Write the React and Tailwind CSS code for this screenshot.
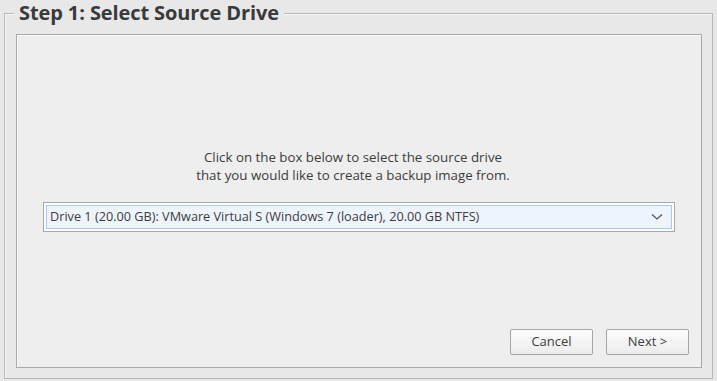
export default function App() {
  return (
    <div className="w-[717px] h-[381px] bg-[#e8e8e8] pl-[4px] pr-[4px] pt-[13px] pb-[2px] font-['Open_Sans',sans-serif] text-[#3c3c3c]">
      <div className="relative h-[366px] border border-[#b8b8b8] shadow-[inset_1px_1px_0_#f6f6f6] pl-[11px] pr-[10px] pt-[20px] pb-[10px] flex">
        <div className="absolute left-[9px] top-[-14px] px-[5px] bg-[#e8e8e8] text-[20px] leading-[26px] font-bold tracking-[-0.1px] text-[#3a3a3a]">
          Step 1: Select Source Drive
        </div>
        <div className="flex-1 flex flex-col border border-[#a9a9a9] bg-[#eeeeee] shadow-[inset_1px_1px_0_#fafafa] pt-[113px] pb-[12px] pr-[12px]">
          <p className="text-center text-[13.3px] leading-[18px] text-[#3c3c3c]">
            Click on the box below to select the source drive
            <br />
            that you would like to create a backup image from.
          </p>
          <div className="mt-[18px] ml-[26px] mr-[14px] h-[30px] border border-[#a8a8a8] bg-white p-[2px]">
            <div className="h-full border border-[#a6c8f2] bg-[#eef4fc] flex items-center pl-[3px] pr-[8px]">
              <span className="flex-1 text-[12.7px] text-[#3c3c3c] whitespace-nowrap">
                Drive 1 (20.00 GB): VMware Virtual S (Windows 7 (loader), 20.00 GB NTFS)
              </span>
              <svg width="12" height="8" viewBox="0 0 12 8" className="text-[#555]">
                <path d="M1 1.5 L6 6 L11 1.5" fill="none" stroke="currentColor" strokeWidth="1.3" />
              </svg>
            </div>
          </div>
          <div className="flex-1" />
          <div className="flex justify-end gap-[13px]">
            <button className="w-[83px] h-[26px] border border-[#a5a5a5] rounded-[2px] bg-gradient-to-b from-[#fcfcfc] to-[#ececec] text-[13px] text-[#3c3c3c]">
              Cancel
            </button>
            <button className="w-[83px] h-[26px] border border-[#a5a5a5] rounded-[2px] bg-gradient-to-b from-[#fcfcfc] to-[#ececec] text-[13px] text-[#3c3c3c]">
              Next &gt;
            </button>
          </div>
        </div>
      </div>
    </div>
  )
}
